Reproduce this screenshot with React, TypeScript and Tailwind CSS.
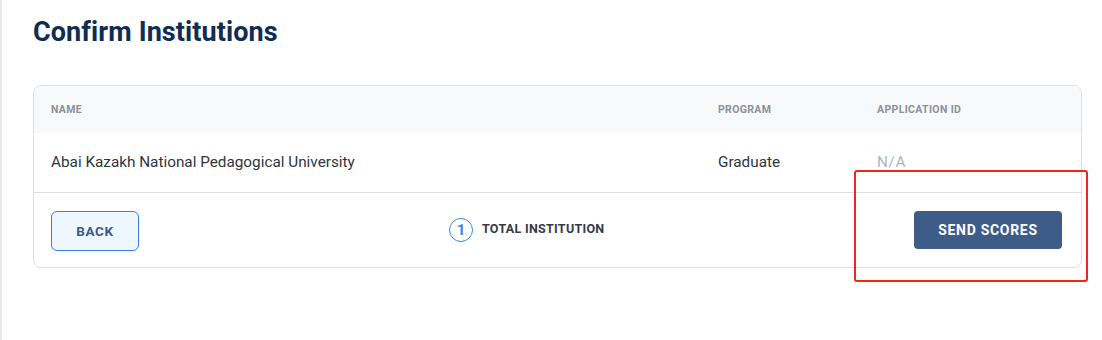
import React from "react";

export default function App() {
  return (
    <div
      className="relative w-[1102px] h-[340px] bg-white border-l-2 border-[#e6e8ec] overflow-hidden"
      style={{ fontFamily: "Roboto, 'Liberation Sans', sans-serif" }}
    >
      <div className="pl-[31px] pr-[18px] pt-[16px]">
        <h1 className="text-[27px] leading-[32px] font-bold text-[#0f2d52] tracking-[0.1px]">
          Confirm Institutions
        </h1>
        <div className="mt-[37px] w-[1049px] border border-[#dcdee2] rounded-[8px] overflow-hidden">
          <div className="flex items-center h-[47px] bg-[#f8f9fb] text-[10.5px] font-bold text-[#8b9099] tracking-[0.35px]">
            <div className="pl-[17px] w-[684px]">NAME</div>
            <div className="w-[159px]">PROGRAM</div>
            <div>APPLICATION ID</div>
          </div>
          <div className="flex items-center h-[60px] border-b border-[#dcdee2] text-[15.3px] text-[#2f3540]">
            <div className="pl-[17px] w-[684px]">Abai Kazakh National Pedagogical University</div>
            <div className="w-[159px]">Graduate</div>
            <div className="text-[#b0b4ba] tracking-[0.6px]">N/A</div>
          </div>
          <div className="flex items-center h-[74px] pl-[17px] pr-[19px]">
            <button className="w-[88px] h-[40px] mt-[2px] rounded-[6px] border border-[#2f86d4] bg-[#eff7fe] text-[13.5px] font-bold text-[#3b5a84] tracking-[0.6px]">
              BACK
            </button>
            <div className="flex items-center gap-[9px] ml-[310px]">
              <div className="w-[24px] h-[24px] rounded-full border-[1.5px] border-[#2f8ae0] flex items-center justify-center text-[15px] font-bold text-[#2f8ae0]">
                1
              </div>
              <span className="text-[12.5px] font-bold text-[#343a46] tracking-[0.3px] -mt-[2px]">TOTAL INSTITUTION</span>
            </div>
            <button className="ml-auto w-[148px] h-[38px] rounded-[4px] bg-[#3d5c87] text-[14px] font-bold text-white tracking-[0.7px]">
              SEND SCORES
            </button>
          </div>
        </div>
      </div>
      <div className="absolute left-[852px] top-[170px] w-[234px] h-[112px] border-[2.5px] border-[#f0261d] rounded-[3px] pointer-events-none" />
    </div>
  );
}
